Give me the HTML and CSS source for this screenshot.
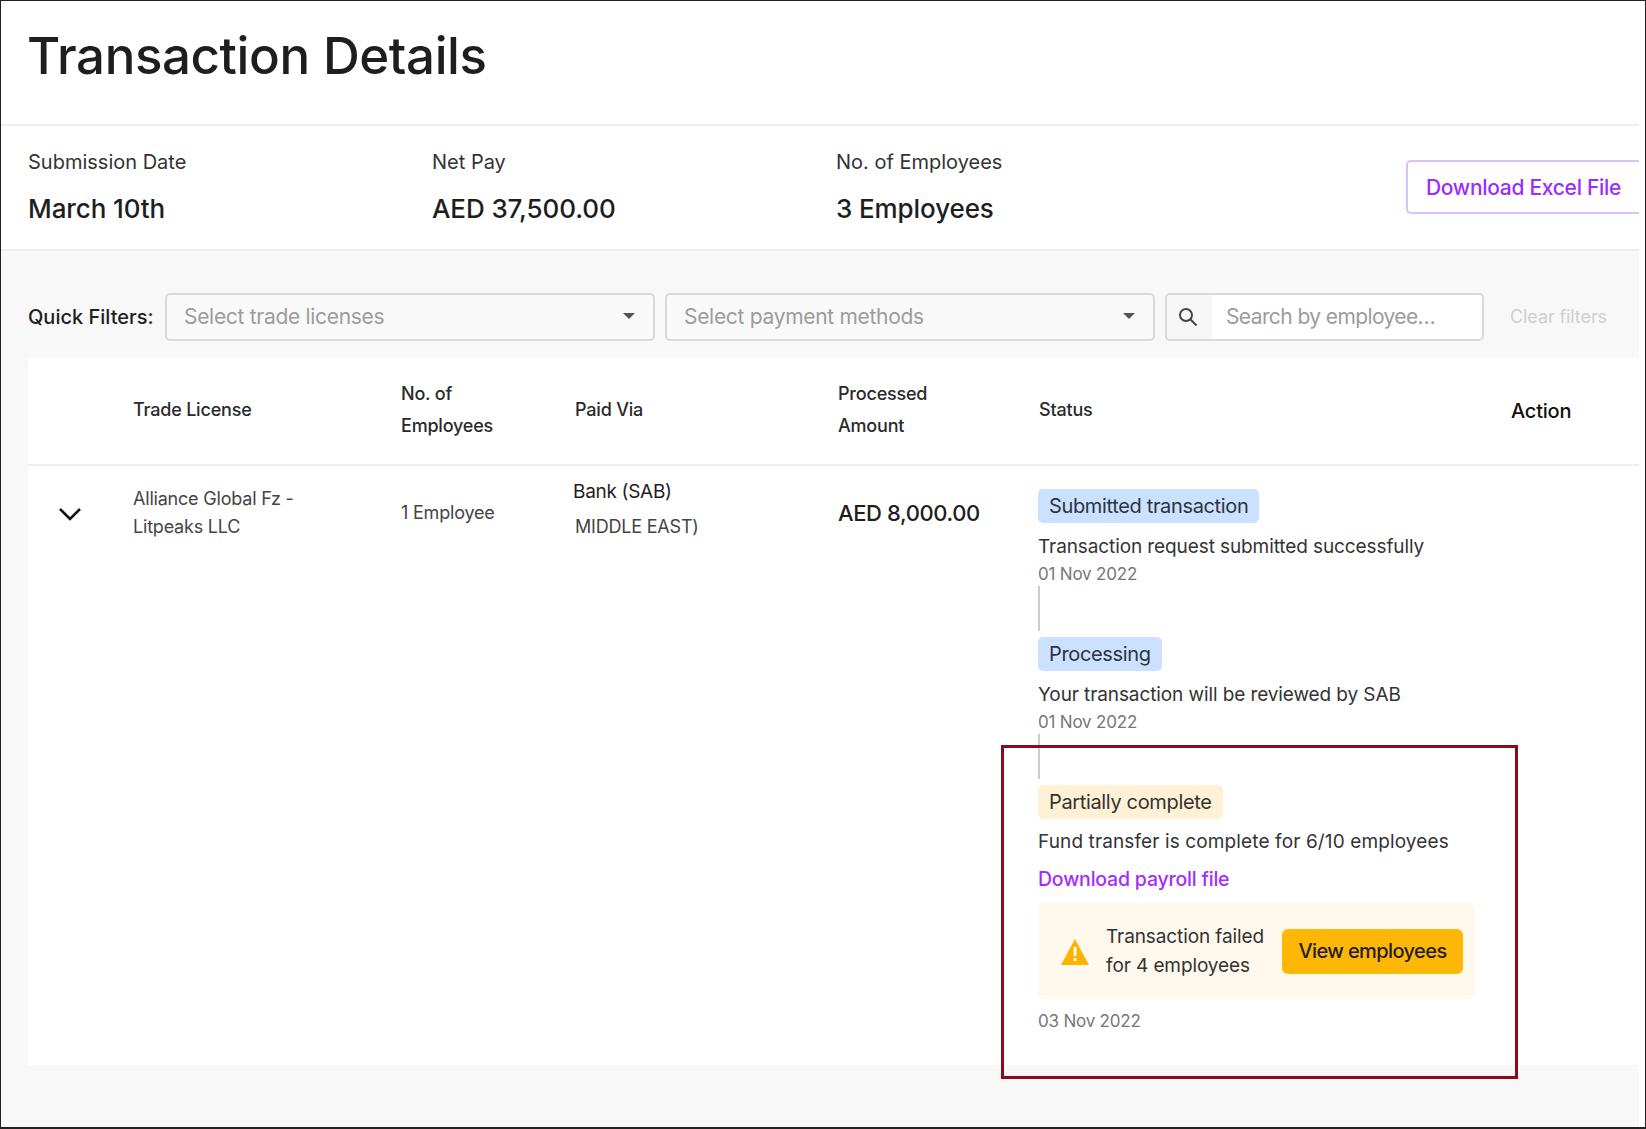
FILE: index.html
```html
<!DOCTYPE html>
<html lang="en">
<head>
    <meta charset="UTF-8">
    <meta name="viewport" content="width=device-width, initial-scale=1.0">
    <title>Transaction Details</title>
    <link rel="stylesheet" href="styles.css">
</head>
<body>
    <div class="page">
        <div class="header">
            <h1>Transaction Details</h1>
        </div>

        <div class="summary">
            <div class="summary-item">
                <div class="summary-label">Submission Date</div>
                <div class="summary-value">March 10th</div>
            </div>
            <div class="summary-item">
                <div class="summary-label">Net Pay</div>
                <div class="summary-value">AED 37,500.00</div>
            </div>
            <div class="summary-item">
                <div class="summary-label">No. of Employees</div>
                <div class="summary-value">3 Employees</div>
            </div>
            <button class="download-btn">Download Excel File</button>
        </div>

        <div class="content">
            <div class="filters">
                <span class="filters-label">Quick Filters:</span>
                <div class="select">Select trade licenses<span class="caret"></span></div>
                <div class="select">Select payment methods<span class="caret"></span></div>
                <div class="search">
                    <span class="search-icon">
                        <svg width="24" height="24" viewBox="0 0 24 24" fill="none" stroke="#444" stroke-width="2"><circle cx="10" cy="10" r="6"/><path d="M14.5 14.5L20.5 20.5"/></svg>
                    </span>
                    <span class="search-text">Search by employee…</span>
                </div>
                <span class="clear-filters">Clear filters</span>
            </div>

            <div class="table">
                <div class="table-head">
                    <div></div>
                    <div>Trade License</div>
                    <div>No. of<br>Employees</div>
                    <div>Paid Via</div>
                    <div>Processed<br>Amount</div>
                    <div>Status</div>
                    <div class="action-head">Action</div>
                </div>
                <div class="table-row">
                    <div class="chevron">
                        <svg width="24" height="16" viewBox="0 0 24 16" fill="none" stroke="#111" stroke-width="2.6"><path d="M2 3L12 13L22 3"/></svg>
                    </div>
                    <div class="cell-license">Alliance Global Fz -<br>Litpeaks LLC</div>
                    <div class="cell-count">1 Employee</div>
                    <div class="cell-paid">
                        <div class="bank">Bank (SAB)</div>
                        <div>MIDDLE EAST)</div>
                    </div>
                    <div class="cell-amount">AED 8,000.00</div>
                    <div class="timeline">
                        <span class="tag tag-blue">Submitted transaction</span>
                        <div class="step-text">Transaction request submitted successfully</div>
                        <div class="step-date">01 Nov 2022</div>
                        <div class="step-line"></div>

                        <span class="tag tag-blue">Processing</span>
                        <div class="step-text">Your transaction will be reviewed by SAB</div>
                        <div class="step-date">01 Nov 2022</div>
                        <div class="step-line"></div>

                        <span class="tag tag-yellow">Partially complete</span>
                        <div class="step-text wide">Fund transfer is complete for 6/10 employees</div>
                        <a class="step-link" href="#">Download payroll file</a>
                        <div class="alert">
                            <svg class="alert-icon" width="28" height="26" viewBox="0 0 28 26"><path d="M14 0L28 26H0Z" fill="#ffb300"/><rect x="12.6" y="8" width="2.8" height="9" fill="#fff"/><rect x="12.6" y="19" width="2.8" height="3" fill="#fff"/></svg>
                            <div class="alert-text">Transaction failed<br>for 4 employees</div>
                            <button class="view-btn">View employees</button>
                        </div>
                        <div class="step-date last">03 Nov 2022</div>
                    </div>
                </div>
            </div>
        </div>

        <div class="highlight"></div>
    </div>
</body>
</html>
```

FILE: styles.css
```css
* {
    margin: 0;
    padding: 0;
    box-sizing: border-box;
    font-family: 'Inter', 'Liberation Sans', sans-serif;
}

body {
    background-color: white;
    color: #1e1e1e;
}

.page {
    position: relative;
    width: 1646px;
    height: 1129px;
    overflow: hidden;
    padding: 0 6px 0 0;
    border: 1px solid #222;
    border-bottom-width: 2px;
}

.header {
    height: 125px;
    padding: 28px 0 0 26px;
    border-bottom: 2px solid #eeeeee;
}

.header h1 {
    font-size: 51px;
    line-height: 54px;
    font-weight: 500;
    letter-spacing: -0.4px;
}

.summary {
    display: flex;
    height: 125px;
    padding-left: 27px;
    border-bottom: 2px solid #eeeeee;
}

.summary-item {
    width: 404px;
    padding-top: 23px;
}

.summary-label {
    font-size: 20px;
    line-height: 26px;
    color: #333;
}

.summary-value {
    margin-top: 19px;
    font-size: 26px;
    line-height: 30px;
    font-weight: 500;
    letter-spacing: -0.1px;
}

.download-btn {
    margin: 34px 0 0 auto;
    width: 233px;
    height: 54px;
    background-color: white;
    color: #9b2cff;
    border: 2px solid #dcc0fb;
    border-right: none;
    border-radius: 5px 0 0 5px;
    font-size: 21px;
    font-weight: 500;
    letter-spacing: -0.3px;
}

.content {
    height: 880px;
    padding: 42px 0 0 27px;
    background-color: #f8f8f8;
}

.filters {
    display: flex;
    align-items: center;
    height: 48px;
}

.filters-label {
    width: 137px;
    font-size: 20px;
    font-weight: 500;
}

.select {
    position: relative;
    width: 490px;
    height: 48px;
    margin-right: 10px;
    padding-left: 17px;
    line-height: 44px;
    font-size: 21px;
    color: #9c9c9c;
    border: 2px solid #d9d9d9;
    border-radius: 5px;
    background-color: #f9f9f9;
    letter-spacing: -0.3px;
}

.caret {
    position: absolute;
    top: 18px;
    right: 18px;
    border-left: 6px solid transparent;
    border-right: 6px solid transparent;
    border-top: 6px solid #555;
}

.search {
    display: flex;
    width: 319px;
    height: 48px;
    border: 2px solid #d9d9d9;
    border-radius: 5px;
    overflow: hidden;
    background-color: white;
}

.search-icon {
    display: flex;
    align-items: center;
    justify-content: center;
    width: 45px;
    padding-right: 4px;
    background-color: #f7f7f7;
}

.search-text {
    padding-left: 14px;
    line-height: 44px;
    font-size: 21px;
    color: #9c9c9c;
    letter-spacing: -0.6px;
}

.clear-filters {
    margin-left: 26px;
    margin-bottom: 2px;
    font-size: 18px;
    color: #cfcfcf;
    letter-spacing: -0.1px;
}

.table {
    margin-top: 17px;
    height: 707px;
    background-color: white;
    border-radius: 4px 0 0 0;
}

.table-head,
.table-row {
    display: grid;
    grid-template-columns: 105px 268px 174px 263px 201px 473px 1fr;
}

.table-head {
    height: 108px;
    padding-bottom: 3px;
    align-items: center;
    font-size: 18px;
    line-height: 32px;
    font-weight: 500;
    color: #2a2a2a;
    border-bottom: 2px solid #eeeeee;
    letter-spacing: -0.2px;
}

.action-head {
    margin-top: 3px;
    margin-left: -1px;
    font-size: 20px;
    color: #111;
}

.table-row {
    font-size: 18px;
    color: #444;
    letter-spacing: -0.2px;
}

.chevron {
    padding: 39px 0 0 30px;
}

.cell-license {
    padding-top: 19px;
    line-height: 28px;
}

.cell-count {
    padding-top: 33px;
    line-height: 28px;
}

.cell-paid {
    padding-top: 8px;
    line-height: 34px;
}

.bank {
    margin-left: -2px;
    line-height: 36px;
    font-size: 19px;
    color: #1e1e1e;
    letter-spacing: -0.3px;
}

.cell-amount {
    padding-top: 32px;
    font-size: 22px;
    line-height: 30px;
    font-weight: 500;
    color: #1e1e1e;
    letter-spacing: -0.4px;
}

.timeline {
    grid-column: 6 / span 2;
    margin-left: -1px;
    padding-top: 23px;
    display: flex;
    flex-direction: column;
    align-items: flex-start;
}

.tag {
    height: 34px;
    padding: 0 11px;
    line-height: 34px;
    font-size: 20px;
    border-radius: 5px;
    color: #2b3440;
    letter-spacing: -0.35px;
}

.tag-blue {
    background-color: #cce1ff;
}

.tag-yellow {
    background-color: #fff1d6;
    color: #333;
}

.step-text {
    margin-top: 11px;
    font-size: 19px;
    line-height: 26px;
    color: #333;
    letter-spacing: -0.1px;
}

.step-text.wide {
    margin-top: 10px;
    letter-spacing: 0.12px;
}

.step-date {
    margin-top: 3px;
    font-size: 17px;
    line-height: 22px;
    color: #777;
    letter-spacing: -0.2px;
}

.step-date.last {
    margin-top: 11px;
}

.step-line {
    width: 2px;
    height: 45px;
    margin: 1px 0 6px;
    background-color: #cccccc;
}

.step-link {
    margin-top: 11px;
    font-size: 19.5px;
    line-height: 26px;
    font-weight: 500;
    color: #a42cff;
    text-decoration: none;
    letter-spacing: -0.2px;
}

.alert {
    display: flex;
    align-items: center;
    width: 437px;
    height: 96px;
    margin-top: 11px;
    padding: 0 12px 0 23px;
    background-color: #fff8ec;
    border-radius: 6px;
}

.alert-icon {
    flex-shrink: 0;
    margin-top: 2px;
}

.alert-text {
    margin-left: 17px;
    font-size: 19px;
    line-height: 29px;
    color: #333;
    white-space: nowrap;
    letter-spacing: -0.1px;
}

.view-btn {
    margin-left: auto;
    width: 181px;
    height: 45px;
    background-color: #ffb706;
    color: #1e1e1e;
    border: none;
    border-radius: 6px;
    font-size: 20px;
    font-weight: 500;
    letter-spacing: -0.6px;
}

.highlight {
    position: absolute;
    top: 744px;
    left: 1000px;
    width: 517px;
    height: 334px;
    border: 3px solid #8c0a1a;
}
```
